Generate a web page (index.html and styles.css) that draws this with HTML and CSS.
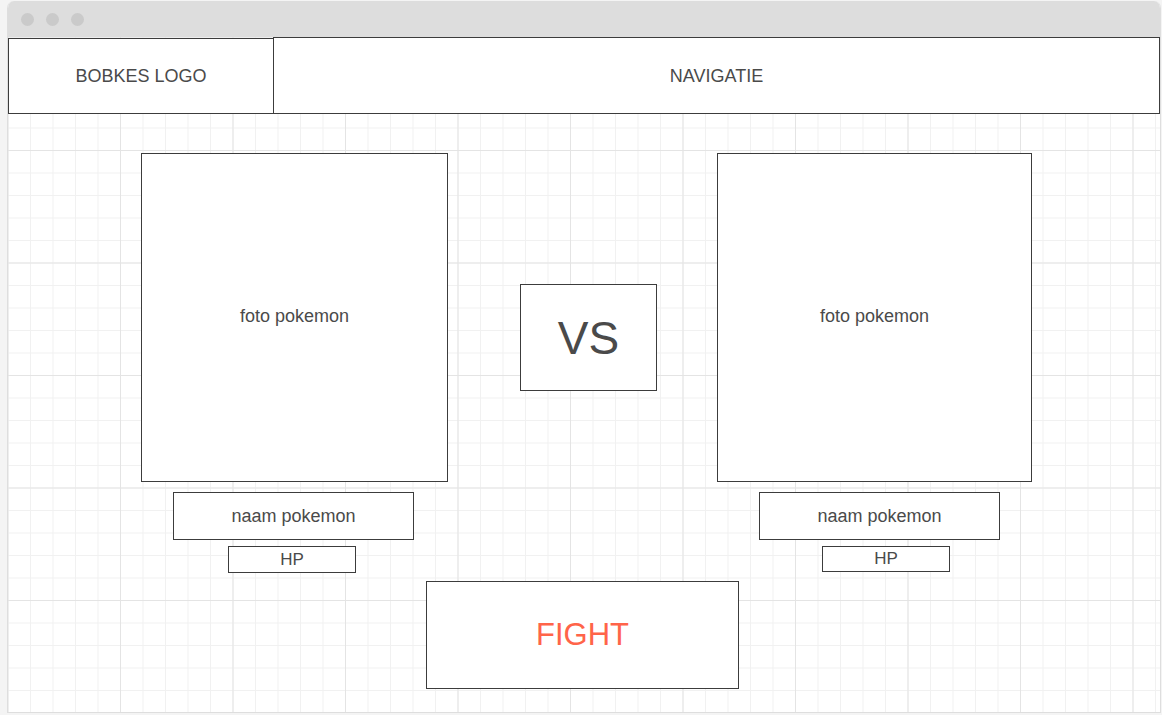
FILE: index.html
```html
<!DOCTYPE html>
<html>
<head>
<meta charset="utf-8">
<title>Pokemon battle wireframe</title>
<link rel="stylesheet" href="styles.css">
</head>
<body>
<div class="window">
  <div class="titlebar">
    <span class="dot"></span><span class="dot"></span><span class="dot"></span>
  </div>
  <div class="canvas">
    <div class="header">
      <div class="box logo">BOBKES LOGO</div>
      <div class="box nav">NAVIGATIE</div>
    </div>
    <div class="row arena">
      <div class="box photo photo-left">foto pokemon</div>
      <div class="box vs">VS</div>
      <div class="box photo photo-right">foto pokemon</div>
    </div>
    <div class="row names">
      <div class="box name name-left">naam pokemon</div>
      <div class="box name name-right">naam pokemon</div>
    </div>
    <div class="row hps">
      <div class="box hp hp-left">HP</div>
      <div class="box hp hp-right">HP</div>
    </div>
    <div class="row fight-row">
      <div class="box fight">FIGHT</div>
    </div>
  </div>
</div>
</body>
</html>
```

FILE: styles.css
```css
* { box-sizing: border-box; }

html, body {
  margin: 0;
  padding: 0;
}

body {
  background: #f4f4f4;
  font-family: "Liberation Sans", Arial, Helvetica, sans-serif;
  color: #4a4a4a;
  width: 1162px;
  height: 715px;
  overflow: hidden;
}

.window {
  margin: 1px 0 0 7px;
  width: 1154px;
  height: 712px;
  border: 1px solid #dedede;
  border-top: none;
  border-radius: 7px 7px 0 0;
  overflow: hidden;
  background: #ffffff;
  display: flex;
  flex-direction: column;
}

.titlebar {
  height: 36px;
  flex: 0 0 36px;
  background: #dddddd;
  display: flex;
  align-items: center;
  gap: 12px;
  padding-left: 13px;
}

.dot {
  width: 13px;
  height: 13px;
  border-radius: 50%;
  background: #cacaca;
}

.canvas {
  flex: 1;
  background-color: #ffffff;
  background-image:
    linear-gradient(to right, #e4e4e4 1px, transparent 1px),
    linear-gradient(to bottom, #e4e4e4 1px, transparent 1px),
    linear-gradient(to right, #f1f1f1 1px, transparent 1px),
    linear-gradient(to bottom, #f1f1f1 1px, transparent 1px);
  background-size:
    112.5px 112.5px,
    112.5px 112.5px,
    22.5px 22.5px,
    22.5px 22.5px;
  background-position: -0.5px 0, 0 0.5px, -0.5px 0, 0 0.5px;
  display: flex;
  flex-direction: column;
}

.box {
  background: #ffffff;
  border: 1px solid #3c3c3c;
  display: flex;
  align-items: center;
  justify-content: center;
  font-size: 18px;
  white-space: nowrap;
}

.header {
  display: flex;
  align-items: flex-start;
  height: 77px;
}

.logo {
  width: 266px;
  height: 76px;
  margin-top: 1px;
}

.nav {
  width: 887px;
  height: 77px;
  margin-left: -1px;
  padding-top: 1px;
}

.row {
  display: flex;
  align-items: flex-start;
}

.arena {
  margin-top: 39px;
  padding-left: 133px;
}

.photo {
  height: 329px;
  padding-bottom: 2px;
}

.photo-left { width: 307px; }

.photo-right {
  width: 315px;
  margin-left: 60px;
}

.vs {
  width: 137px;
  height: 107px;
  margin-top: 131px;
  margin-left: 72px;
  font-size: 46px;
  padding-top: 1px;
}

.names {
  margin-top: 10px;
  padding-left: 165px;
}

.name {
  width: 241px;
  height: 48px;
}

.name-right { margin-left: 345px; }

.hps {
  margin-top: 6px;
  padding-left: 220px;
}

.hp {
  width: 128px;
  height: 27px;
  font-size: 17px;
}

.hp-right {
  height: 26px;
  margin-left: 466px;
}

.fight-row {
  margin-top: 8px;
  padding-left: 418px;
}

.fight {
  width: 313px;
  height: 108px;
  font-size: 31px;
  color: #ff6449;
}
```
